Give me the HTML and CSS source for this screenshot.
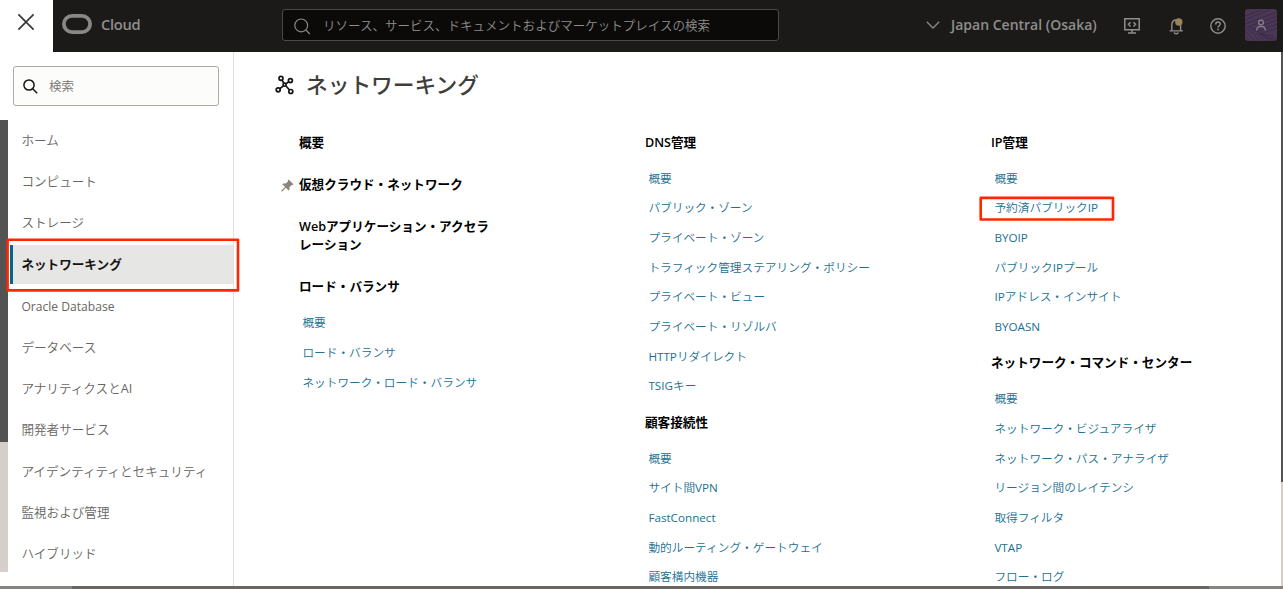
FILE: index.html
```
<!DOCTYPE html>
<html lang="ja">
<head>
<meta charset="utf-8">
<title>ネットワーキング</title>
<link rel="stylesheet" href="styles.css">
</head>
<body>
<div class="app">
  <header class="topbar">
    <button class="close" aria-label="閉じる">
      <svg width="18" height="18" viewBox="0 0 18 18"><path d="M1.4 1.4 16.6 16.6M16.6 1.4 1.4 16.6" fill="none" stroke="#3a3835" stroke-width="1.7"/></svg>
    </button>
    <div class="brand">
      <svg width="30" height="20" viewBox="0 0 30 20"><rect x="1.9" y="1.9" width="26.2" height="16.2" rx="8.1" fill="none" stroke="#888786" stroke-width="3.8"/></svg>
      <span class="brand-name">Cloud</span>
    </div>
    <div class="global-search">
      <svg width="17" height="17" viewBox="0 0 17 17"><g fill="none" stroke="#8a8988" stroke-width="1.2"><circle cx="7.2" cy="7.4" r="6.4"/><path d="M11.8 12l4 4"/></g></svg>
      <span>リソース、サービス、ドキュメントおよびマーケットプレイスの検索</span>
    </div>
    <div class="region">
      <svg width="14" height="8" viewBox="0 0 14 8"><path d="M.8.8 7 7 13.2.8" fill="none" stroke="#8a8988" stroke-width="1.3"/></svg>
      <span>Japan Central (Osaka)</span>
    </div>
    <svg class="tool tool-dev" width="16" height="16" viewBox="0 0 16 16"><g fill="none" stroke="#8f8e8d" stroke-width="1.5"><path d="M.8.8h14.4v11H.8zM8 11.8v3M4 15h8M6.500 4.200 4.500 6.300l2 2.100M9.500 4.200l2 2.100-2 2.100"/></g></svg>
    <svg class="tool tool-bell" width="15" height="17" viewBox="0 0 15 17"><g fill="none" stroke="#8f8e8d" stroke-width="1.4"><path d="M2.8 11.800V7.200C2.8 4 4.600 2 7.200 2s4.400 2 4.400 5.200v4.600M.6 12.900h2.200v-2M13.900 12.900h-2.300v-2M.6 12.900h13.300M5 14.400c.6 1.700 3.800 1.700 4.400 0"/></g><circle cx="9.800" cy="4" r="3.700" fill="#9a8354"/></svg>
    <svg class="tool tool-help" width="16" height="16" viewBox="0 0 16 16"><circle cx="8" cy="8" r="7.200" fill="none" stroke="#8f8e8d" stroke-width="1.4"/><path d="M5.700 6.400C5.700 4.800 6.700 4 8 4s2.300.8 2.300 2.100c0 1.600-2.300 1.800-2.300 3.500" fill="none" stroke="#8f8e8d" stroke-width="1.4"/><circle cx="8" cy="11.500" r=".9" fill="#8f8e8d"/></svg>
    <svg class="avatar" width="32" height="32" viewBox="0 0 32 32">
      <defs><clipPath id="tile"><rect width="32" height="32" rx="3"/></clipPath></defs>
      <g clip-path="url(#tile)"><rect width="32" height="32" fill="#4a3756"/>
      <path d="M0 7 16 1M0 11 28-1M0 15 32 3M3 18 32 7M8 20 32 11M14 22l18-7M18 24l14-5M0 17l16 16M0 22l11 11M0 27l6 6M4 17l17 16M8 19l18 14M12 22l18 11M17 24l15 9M23 25l9 5" fill="none" stroke="#3a2b46" stroke-width=".9"/></g>
      <g fill="none" stroke="#8c8390" stroke-width="1.2"><circle cx="16" cy="13.600" r="2.400"/><path d="M11.600 21.500c0-3 1.800-4.200 4.400-4.200s4.400 1.200 4.400 4.200"/></g>
    </svg>
  </header>

  <div class="body">
    <div class="edge edge-left"></div>
    <aside class="sidebar">
      <div class="menu-search">
        <svg width="15" height="15" viewBox="0 0 15 15"><g fill="none" stroke="#161513" stroke-width="1.5"><circle cx="6" cy="6" r="5.1"/><path d="M9.7 9.7l4.5 4.5"/></g></svg>
        <span>検索</span>
      </div>
      <nav class="menu">
        <a class="menu-item">ホーム</a>
        <a class="menu-item">コンピュート</a>
        <a class="menu-item">ストレージ</a>
        <a class="menu-item selected">ネットワーキング</a>
        <a class="menu-item latin">Oracle Database</a>
        <a class="menu-item">データベース</a>
        <a class="menu-item"><span>アナリティクスと<span class="latin">AI</span></span></a>
        <a class="menu-item">開発者サービス</a>
        <a class="menu-item">アイデンティティとセキュリティ</a>
        <a class="menu-item">監視および管理</a>
        <a class="menu-item">ハイブリッド</a>
      </nav>
    </aside>

    <main class="content">
      <h1 class="title">
        <svg width="20" height="20" viewBox="0 0 20 20"><g fill="none" stroke="#161513" stroke-width="1.7"><path d="M7 5l2 3.600M14 6.600l-3 2.200M4.400 14l4-3.200M14.300 14.800l-3.500-4"/><circle cx="6" cy="3.300" r="2"/><circle cx="15.400" cy="5.600" r="2"/><circle cx="3.200" cy="14.800" r="2"/><circle cx="15.800" cy="16.500" r="2"/><circle cx="9.600" cy="9.700" r="1.500"/></g></svg>
        <span>ネットワーキング</span>
      </h1>
      <div class="columns">
        <div class="column compact">
          <section class="group"><h2>概要</h2></section>
          <section class="group pinned">
            <svg class="pin" width="13" height="13" viewBox="0 0 13 13"><path d="M7.600.4 12.500 5.300 11.700 6.100 10.700 5.900 8.400 8.200 8.500 10.700 7.600 11.500 4.900 8.800 1.300 12.400H.400V11.600L4.100 8 1.300 5.200 2.200 4.400 4.700 4.500 7.100 2.200 6.800 1.200Z" fill="#8b8580"/></svg>
            <h2>仮想クラウド・ネットワーク</h2>
          </section>
          <section class="group"><h2>Webアプリケーション・アクセラ<br>レーション</h2></section>
          <section class="group"><h2>ロード・バランサ</h2>
            <ul><li>概要</li><li>ロード・バランサ</li><li>ネットワーク・ロード・バランサ</li></ul>
          </section>
        </div>
        <div class="column">
          <section class="group"><h2>DNS管理</h2>
            <ul><li>概要</li><li>パブリック・ゾーン</li><li>プライベート・ゾーン</li><li>トラフィック管理ステアリング・ポリシー</li><li>プライベート・ビュー</li><li>プライベート・リゾルバ</li><li><span class="latin">HTTP</span>リダイレクト</li><li><span class="latin">TSIG</span>キー</li></ul>
          </section>
          <section class="group"><h2>顧客接続性</h2>
            <ul><li>概要</li><li>サイト間<span class="latin">VPN</span></li><li class="latin">FastConnect</li><li>動的ルーティング・ゲートウェイ</li><li>顧客構内機器</li></ul>
          </section>
        </div>
        <div class="column">
          <section class="group"><h2>IP管理</h2>
            <ul><li>概要</li><li>予約済パブリック<span class="latin">IP</span></li><li class="latin">BYOIP</li><li>パブリック<span class="latin">IP</span>プール</li><li><span class="latin">IP</span>アドレス・インサイト</li><li class="latin">BYOASN</li></ul>
          </section>
          <section class="group"><h2>ネットワーク・コマンド・センター</h2>
            <ul><li>概要</li><li>ネットワーク・ビジュアライザ</li><li>ネットワーク・パス・アナライザ</li><li>リージョン間のレイテンシ</li><li>取得フィルタ</li><li class="latin">VTAP</li><li>フロー・ログ</li></ul>
          </section>
        </div>
      </div>
    </main>
    <div class="edge edge-right"></div>
  </div>
  <footer class="bottom"><i class="track"></i><i class="thumb"></i><i class="track end"></i></footer>
  <svg class="callouts" width="1283" height="589" viewBox="0 0 1283 589">
    <g fill="none" stroke="#ff2600" stroke-width="2.600" stroke-linejoin="round"><rect x="7.600" y="239.800" width="230.400" height="50.600"/><rect x="980.700" y="197.900" width="132.300" height="21.600"/></g>
  </svg>
</div>
</body>
</html>
```
FILE: styles.css
```
* { box-sizing: border-box; }
body { margin: 0; background: #fff; font-family: "Open Sans", "Noto Sans CJK JP", sans-serif; color: #161513; }
ul, h1, h2 { margin: 0; padding: 0; list-style: none; }
svg { flex: none; display: block; }
.app { position: relative; display: flex; flex-direction: column; width: 1283px; height: 589px; overflow: hidden; }

.topbar { flex: none; display: flex; align-items: center; height: 52px; background: #1b1a18; color: #8f8e8d; }
.close { width: 53px; height: 52px; padding: 0 0 8px 17px; border: 0; background: #fff; }
.brand { display: flex; align-items: center; gap: 9px; width: 229px; padding: 0 0 4px 9px; }
.brand-name { padding-bottom: 1px; font-size: 14.700px; font-weight: 600; line-height: 20px; letter-spacing: -.3px; }
.global-search { display: flex; align-items: center; gap: 12px; width: 497px; height: 32px; margin-bottom: 2px; padding-left: 11px; border: 1px solid #4b4a49; border-radius: 3px; background: #0b0a09; font-size: 12.530px; font-weight: 350; white-space: nowrap; }
.global-search svg { margin-top: 3px; }
.global-search span { padding-bottom: 2px; }
.region { display: flex; align-items: center; gap: 11px; width: 198px; margin-left: 147px; padding-bottom: 2px; font-size: 14px; font-weight: 600; white-space: nowrap; }
.region span { padding-bottom: 1px; }
.tool-dev { margin-right: 29px; }
.tool-bell { margin-right: 26px; }
.tool-help { margin-right: 19px; }
.avatar { margin-bottom: 2px; }

.body { flex: none; display: flex; height: 534px; overflow: hidden; }
.edge-left { flex: none; width: 8px; height: 452px; margin-top: 68px; background: linear-gradient(#535353 322px, #d4cfca 322px); }
.edge-right { flex: none; width: 2px; background: linear-gradient(#535353 430px, #d4cfca 430px); }
.sidebar { flex: none; width: 226px; padding: 14px 0 0; border-right: 1px solid #e3e1df; }
.menu-search { display: flex; align-items: center; gap: 11px; width: 206px; height: 40px; margin-left: 5px; padding-left: 9px; border: 1px solid #aea9a4; border-radius: 3px; background: #fcfcfa; color: #75736f; font-size: 12.500px; font-weight: 350; }
.menu-search span { padding-bottom: 1px; }
.menu { display: flex; flex-direction: column; padding: 13.600px 0 0 2px; }
.menu-item { display: flex; align-items: center; height: 41.400px; padding: 0 0 2.400px 11.400px; color: #686663; font-size: 12.600px; font-weight: 350; white-space: nowrap; }
.menu-item.latin { padding-top: 1px; padding-bottom: 0; font-size: 12.100px; }
.menu-item.selected { height: 39px; margin: 1.200px 0; padding-left: 8.400px; border-left: 3px solid #00688c; background: #e6e6e4; color: #161513; font-weight: 600; }
.latin { font-weight: 400 !important; }

.content { flex: 1; min-width: 0; padding: 19px 0 0 41px; }
.title { display: flex; align-items: center; gap: 11px; height: 28px; color: #403e3b; font-size: 21.700px; font-weight: 500; }
.title span { padding-bottom: 4px; }
.columns { display: grid; grid-template-columns: 346px 346px 1fr; padding: 34.600px 0 0 24px; }
.group { position: relative; padding-bottom: 12.700px; }
.compact .group { padding-bottom: 12.250px; }
.group h2 { margin-bottom: 12px; color: #000; font-size: 12.600px; font-weight: 600; line-height: 18px; white-space: nowrap; }
.pin { position: absolute; left: -18px; top: 3px; }
.group li { height: 29.660px; padding-left: 3.400px; color: #226f92; font-size: 11.680px; font-weight: 350; line-height: 29.660px; white-space: nowrap; }

.bottom { flex: none; display: flex; height: 3px; background: #6b6866; }
.track { width: 72px; background: #858483; }
.thumb { width: 1137px; background: #696664; }
.track.end { flex: 1; }
.callouts { position: absolute; inset: 0; pointer-events: none; }
```
